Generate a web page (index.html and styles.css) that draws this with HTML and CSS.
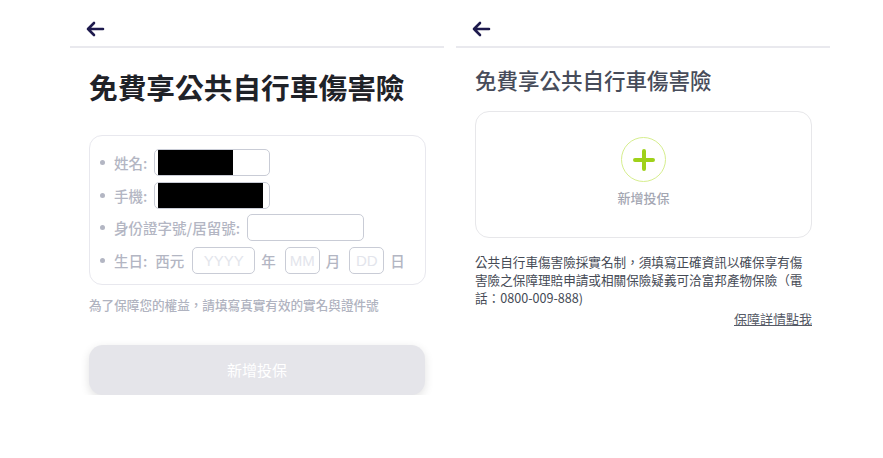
FILE: index.html
```html
<!DOCTYPE html>
<html lang="zh-Hant">
<head>
<meta charset="utf-8">
<link rel="stylesheet" href="styles.css">
</head>
<body>
<div class="screens">
  <section class="panel panel-form">
    <header class="topbar">
      <svg class="back" width="20" height="16" viewBox="0 0 20 16"><path d="M18 8H3M9 2L3 8l6 6" fill="none" stroke="#1e1a4d" stroke-width="2.6" stroke-linecap="round" stroke-linejoin="round"/></svg>
    </header>
    <div class="content">
      <h1 class="title-lg">免費享公共自行車傷害險</h1>
      <div class="form-card">
        <div class="row"><span class="dot"></span><span class="label">姓名:</span><span class="field f-name"><span class="redact r-name"></span></span></div>
        <div class="row"><span class="dot"></span><span class="label">手機:</span><span class="field f-name"><span class="redact r-phone"></span></span></div>
        <div class="row"><span class="dot"></span><span class="label">身份證字號/居留號:</span><span class="field f-id"></span></div>
        <div class="row"><span class="dot"></span><span class="label">生日:</span><span class="label era">西元</span><span class="field f-year">YYYY</span><span class="label unit">年</span><span class="field f-md">MM</span><span class="label unit">月</span><span class="field f-md">DD</span><span class="label unit">日</span></div>
      </div>
      <p class="hint">為了保障您的權益，請填寫真實有效的實名與證件號</p>
      <button class="submit">新增投保</button>
    </div>
  </section>
  <section class="panel panel-list">
    <header class="topbar">
      <svg class="back" width="20" height="16" viewBox="0 0 20 16"><path d="M18 8H3M9 2L3 8l6 6" fill="none" stroke="#1e1a4d" stroke-width="2.6" stroke-linecap="round" stroke-linejoin="round"/></svg>
    </header>
    <div class="content">
      <h2 class="title-sm">免費享公共自行車傷害險</h2>
      <div class="add-card">
        <span class="plus-circle">
          <svg width="22" height="22" viewBox="0 0 22 22"><path d="M11 2v18M2 11h18" stroke="#9fd11a" stroke-width="4" stroke-linecap="round"/></svg>
        </span>
        <span class="add-label">新增投保</span>
      </div>
      <p class="notice">公共自行車傷害險採實名制，須填寫正確資訊以確保享有傷害險之保障理賠申請或相關保險疑義可洽富邦產物保險（電話：0800-009-888)</p>
      <div class="more"><a class="more-link">保障詳情點我</a></div>
    </div>
  </section>
</div>
</body>
</html>
```

FILE: styles.css
```css
* { box-sizing: border-box; }
html, body { margin: 0; background: #fff; }
body {
  font-family: "Noto Sans CJK TC", "Noto Sans", "Liberation Sans", sans-serif;
  color: #222;
}
.screens {
  display: flex;
  gap: 12px;
  padding-left: 70px;
}
.panel { width: 374px; }
.topbar {
  height: 48px;
  border-bottom: 2px solid #e9e9ee;
  display: flex;
  align-items: flex-start;
  padding-left: 15px;
  padding-top: 21px;
}
.back { display: block; }
.content { padding: 0 18px 0 19px; }

.title-lg {
  margin: 19px 0 0;
  font-size: 28.7px;
  line-height: 40px;
  font-weight: 700;
  color: #1f2228;
  letter-spacing: 0;
}
.form-card {
  margin-top: 28px;
  border: 1px solid #e8e8ee;
  border-radius: 13px;
  padding: 10px 10px 7px 10px;
}
.row {
  display: flex;
  align-items: center;
  height: 32.7px;
  font-size: 14.5px;
  font-weight: 500;
  color: #b3b6c3;
}
.dot {
  width: 5px; height: 5px; border-radius: 50%;
  background: #b3b6c3;
  margin-right: 9px;
}
.label { white-space: nowrap; }
.field {
  display: inline-flex;
  align-items: center;
  justify-content: center;
  height: 27px;
  border: 1px solid #c9ccd6;
  border-radius: 5px;
  margin-left: 7px;
  color: #e3e5ec;
  font-family: "Liberation Sans", sans-serif;
  font-weight: 400;
  font-size: 15px;
  position: relative;
  overflow: hidden;
}
.f-name { width: 116px; justify-content: flex-start; padding-left: 3px; }
.f-id { width: 117px; }
.f-year { width: 63px; margin-left: 8px; }
.f-md { width: 35px; margin-left: 9px; }
.era { margin-left: 8px; }
.unit { margin-left: 6px; }
.redact { display: block; height: 25px; background: #000; }
.r-name { width: 75px; }
.r-phone { width: 105px; }

.hint {
  margin: 11px 0 0;
  font-size: 12.6px;
  line-height: 18px;
  font-weight: 500;
  letter-spacing: 0;
  color: #b0b3c0;
}
.submit {
  display: block;
  width: 336px;
  height: 50px;
  margin-top: 31px;
  border: 0;
  border-radius: 14px;
  background: #e5e5ea;
  color: #fff;
  font-family: inherit;
  font-size: 15px;
  box-shadow: 0 3px 10px rgba(0,0,0,0.12);
}

.panel-list .content { padding-left: 19px; padding-right: 18px; }
.title-sm {
  margin: 17px 0 0;
  font-size: 21.5px;
  line-height: 30px;
  font-weight: 500;
  color: #474c5a;
}
.add-card {
  margin-top: 16px;
  height: 127px;
  border: 1px solid #e7e7ea;
  border-radius: 14px;
  display: flex;
  flex-direction: column;
  align-items: center;
  padding-top: 25px;
}
.plus-circle {
  width: 45px; height: 45px;
  border: 1.5px solid #d6ee8e;
  border-radius: 50%;
  display: flex;
  align-items: center;
  justify-content: center;
}
.add-label {
  margin-top: 6px;
  font-size: 13px;
  font-weight: 500;
  color: #a3a6b2;
}
.notice {
  margin: 15px 0 0;
  font-size: 12.6px;
  line-height: 18px;
  color: #454a55;
}
.more {
  display: flex;
  justify-content: flex-end;
  margin-top: 3px;
}
.more-link {
  font-size: 13px;
  line-height: 18px;
  color: #555a66;
  text-decoration: underline;
}
```
